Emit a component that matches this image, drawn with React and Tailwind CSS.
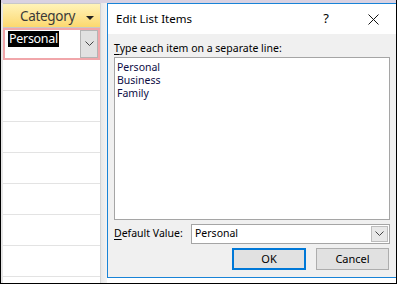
import React from 'react';

const font = { fontFamily: '"Noto Sans", "Open Sans", sans-serif' };

function Chevron({ className }) {
  return (
    <svg width="9" height="6" viewBox="0 0 9 6" className={className}>
      <path d="M0.5 0.5 L4.5 4.5 L8.5 0.5" fill="none" stroke="#444" strokeWidth="1" />
    </svg>
  );
}

function Datasheet() {
  const rows = [0, 1, 2, 3, 4, 5, 6];
  return (
    <div className="flex h-full">
      <div className="w-[2px] bg-[#e6e6e6]" />
      <div className="flex w-[98px] flex-col border-r border-[#d4d4d4]">
        <div className="relative flex h-[25px] items-center justify-center border-b border-t border-[#c8c8c8] bg-gradient-to-b from-[#fff3b8] to-[#fcd86e] pt-[2px]">
          <span className="pr-[8px] text-[13.5px] tracking-[-0.3px] text-[#3a3a3a]" style={font}>Category</span>
          <span className="absolute right-[6px] top-[12px] h-0 w-0 border-l-[4px] border-r-[4px] border-t-[4px] border-l-transparent border-r-transparent border-t-[#222]" />
        </div>
        <div className="flex h-[32px] items-stretch border-2 border-[#f1a6aa] bg-white">
          <div className="flex flex-1 items-start pl-[3px] pt-[1px]">
            <span className="bg-black px-[1px] text-[12.5px] leading-[16px] tracking-[-0.3px] text-white" style={font}>Personal</span>
          </div>
          <div className="flex w-[18px] items-center justify-center border border-[#b4b4b4] bg-[#e1e1e1]">
            <Chevron />
          </div>
        </div>
        {rows.map((r) => (
          <div key={r} className="h-[31px] shrink-0 border-b border-[#e3e3e3] bg-white" />
        ))}
      </div>
      <div className="w-[6px] bg-gradient-to-r from-[#e8e8e8] to-[#f3f3f3]" />
    </div>
  );
}

function Dialog() {
  return (
    <div
      className="absolute left-[106px] top-[3px] flex h-[275px] w-[290px] flex-col border border-[#1883d7] bg-[#f0f0f0] text-[10.5px] text-black"
      style={font}
    >
      <div className="flex h-[30px] items-center bg-white pl-[8px]">
        <span className="text-[11.5px]">Edit List Items</span>
        <span className="ml-auto mr-[39px] text-[13px]">?</span>
        <svg width="11" height="11" viewBox="0 0 11 11" className="mr-[17px]">
          <path d="M0.5 0.5 L10.5 10.5 M10.5 0.5 L0.5 10.5" stroke="#111" strokeWidth="1" />
        </svg>
      </div>
      <div className="flex flex-1 flex-col px-[6px] pt-[6px]">
        <div className="h-[17px] whitespace-nowrap leading-[17px]">
          <span className="underline underline-offset-2">T</span>ype each item on a separate line:
        </div>
        <div className="h-[163px] border border-[#a5a5a5] bg-white px-[2px] pt-[3px] leading-[13px] text-[#0d0d45]">
          <div>Personal</div>
          <div>Business</div>
          <div>Family</div>
        </div>
        <div className="mt-[4px] flex h-[20px] items-center">
          <span className="w-[77px] whitespace-nowrap">
            <span className="underline underline-offset-2">D</span>efault Value:
          </span>
          <div className="flex h-[20px] flex-1 items-center border border-[#a5a5a5] bg-white pl-[3px]">
            <span>Personal</span>
            <div className="ml-auto mr-[1px] flex h-[16px] w-[17px] items-center justify-center border border-[#bdbdbd] bg-[#e8e8e8]">
              <Chevron />
            </div>
          </div>
        </div>
        <div className="mt-[4px] flex justify-end gap-[10px] pr-[1px]">
          <button className="flex h-[22px] w-[74px] items-center justify-center border-2 border-[#0078d7] bg-[#e1e1e1] text-[11px]">OK</button>
          <button className="flex h-[22px] w-[73px] items-center justify-center border border-[#adadad] bg-[#e1e1e1] text-[11px]">Cancel</button>
        </div>
      </div>
    </div>
  );
}

export default function App() {
  return (
    <div className="relative h-[284px] w-[397px] overflow-hidden border-b border-l border-r border-black bg-white">
      <div className="h-[3px] bg-[#d9d2e2]" />
      <div className="h-[280px]">
        <Datasheet />
      </div>
      <Dialog />
    </div>
  );
}
